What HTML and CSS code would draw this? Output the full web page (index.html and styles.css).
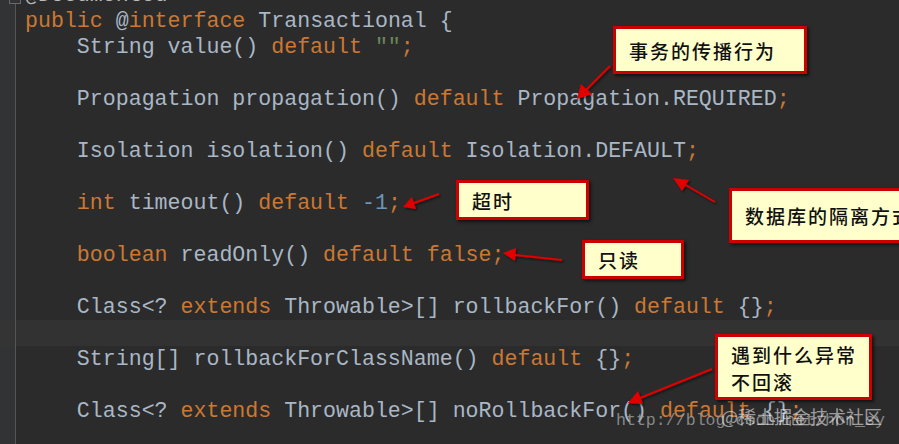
FILE: index.html
```html
<!DOCTYPE html>
<html lang="zh">
<head>
<meta charset="utf-8">
<link rel="stylesheet" href="styles.css">
</head>
<body>
<div class="editor">
  <div class="line"><span class="g"><span class="fold"></span></span><span class="t"><span class="an">@Documented</span></span></div>
  <div class="line"><span class="g"></span><span class="t"><span class="kw">public</span> <span class="at">@</span><span class="kw">interface</span> Transactional {</span></div>
  <div class="line"><span class="g"></span><span class="t">    String value() <span class="kw">default</span> <span class="str">""</span><span class="kw">;</span></span></div>
  <div class="line"><span class="g"></span><span class="t"></span></div>
  <div class="line"><span class="g"></span><span class="t">    Propagation propagation() <span class="kw">default</span> Propagation.REQUIRED<span class="kw">;</span></span></div>
  <div class="line"><span class="g"></span><span class="t"></span></div>
  <div class="line"><span class="g"></span><span class="t">    Isolation isolation() <span class="kw">default</span> Isolation.DEFAULT<span class="kw">;</span></span></div>
  <div class="line"><span class="g"></span><span class="t"></span></div>
  <div class="line"><span class="g"></span><span class="t">    <span class="kw">int</span> timeout() <span class="kw">default</span> <span class="num">-1</span><span class="kw">;</span></span></div>
  <div class="line"><span class="g"></span><span class="t"></span></div>
  <div class="line"><span class="g"></span><span class="t">    <span class="kw">boolean</span> readOnly() <span class="kw">default false;</span></span></div>
  <div class="line"><span class="g"></span><span class="t"></span></div>
  <div class="line"><span class="g"></span><span class="t">    Class&lt;? <span class="kw">extends</span> Throwable&gt;[] rollbackFor() <span class="kw">default</span> {}<span class="kw">;</span></span></div>
  <div class="line caret"><span class="g"></span><span class="t"></span></div>
  <div class="line"><span class="g"></span><span class="t">    String[] rollbackForClassName() <span class="kw">default</span> {}<span class="kw">;</span></span></div>
  <div class="line"><span class="g"></span><span class="t"></span></div>
  <div class="line"><span class="g"></span><span class="t">    Class&lt;? <span class="kw">extends</span> Throwable&gt;[] noRollbackFor() <span class="kw">default</span> {}<span class="kw">;</span></span></div>
  <div class="line"><span class="g"></span><span class="t"></span></div>
</div>

<svg class="arrows" width="899" height="444" viewBox="0 0 899 444">
  <defs>
    <filter id="sh" x="-20%" y="-20%" width="140%" height="140%">
      <feDropShadow dx="1.5" dy="1.5" stdDeviation="1" flood-color="#000" flood-opacity="0.6"/>
    </filter>
  </defs>
  <g fill="#e00000" stroke="#e00000" stroke-width="2" filter="url(#sh)">
    <line x1="610" y1="66" x2="586" y2="90"/>
    <polygon stroke="none" points="577,99 581,84 592,94"/>
    <line x1="439" y1="194" x2="414" y2="203"/>
    <polygon stroke="none" points="403,207 412,197 416,209"/>
    <line x1="562" y1="260" x2="515" y2="255"/>
    <polygon stroke="none" points="503,253 516,248 515,261"/>
    <line x1="715" y1="202" x2="684" y2="184"/>
    <polygon stroke="none" points="673,178 689,180 682,191"/>
    <line x1="712" y1="369" x2="640" y2="398"/>
    <polygon stroke="none" points="628,403 638,391 643,404"/>
  </g>
</svg>

<div class="note n1">事务的传播行为</div>
<div class="note n2">超时</div>
<div class="note n3">只读</div>
<div class="note n4">数据库的隔离方式</div>
<div class="note n5">遇到什么异常<br>不回滚</div>

<div class="wm-url">http://blog.csdn.net/hon_sy</div>
<div class="wm-juejin">@稀土掘金技术社区</div>
</body>
</html>
```

FILE: styles.css
```css
html, body {
  margin: 0;
  padding: 0;
  width: 899px;
  height: 444px;
  overflow: hidden;
  background: #2b2b2b;
}
body {
  position: relative;
}
.editor {
  margin-top: -18px;
  display: flex;
  flex-direction: column;
  font-family: "Liberation Mono", monospace;
  font-size: 21.6px;
  color: #a9b7c6;
}
.line {
  display: flex;
  height: 26px;
  line-height: 26px;
  background: #2b2b2b;
}
.line.caret {
  background: #323232;
}
.line.caret .g {
  background: #343434;
}
.g {
  position: relative;
  flex: 0 0 15px;
  background: #313335;
  border-right: 1px solid #555555;
}
.fold {
  position: absolute;
  left: 9px;
  top: 12px;
  width: 10px;
  height: 8px;
  border: 1px solid #6a6a6a;
  background: #313335;
}
.t {
  padding-left: 9px;
  white-space: pre;
}
.kw { color: #cc7832; }
.at { color: #a9b7c6; }
.an { color: #bbbbbb; }
.str { color: #6a8759; }
.num { color: #6897bb; }

.arrows {
  position: absolute;
  left: 0;
  top: 0;
}
.note {
  position: absolute;
  box-sizing: border-box;
  background: #ffffcc;
  border: 3px solid #cc0000;
  box-shadow: 2px 2px 3px rgba(0, 0, 0, 0.6);
  font-family: "Noto Sans CJK SC", sans-serif;
  font-size: 19px;
  font-weight: 500;
  letter-spacing: 2px;
  color: #111;
  padding-left: 13px;
  display: flex;
  align-items: center;
}
.n1 { left: 613px; top: 26px; width: 194px; height: 48px; }
.n2 { left: 456px; top: 180px; width: 133px; height: 40px; }
.n3 { left: 582px; top: 240px; width: 102px; height: 39px; }
.n4 { left: 729px; top: 188px; width: 210px; height: 55px; white-space: nowrap; }
.n5 { left: 715px; top: 334px; width: 157px; height: 66px; line-height: 27px; padding-top: 2px; }

.wm-url {
  position: absolute;
  left: 616px;
  top: 411px;
  font-family: "Liberation Mono", monospace;
  font-size: 16.6px;
  color: rgba(160, 160, 160, 0.8);
}
.wm-juejin {
  position: absolute;
  left: 721px;
  top: 403px;
  font-family: "Noto Sans CJK SC", sans-serif;
  font-size: 18px;
  color: rgba(255, 255, 255, 0.55);
}
```
